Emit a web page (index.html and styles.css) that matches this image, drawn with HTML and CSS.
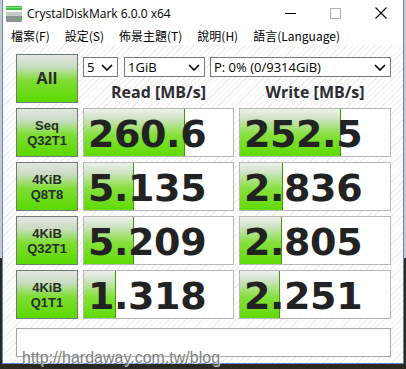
FILE: index.html
```html
<!DOCTYPE html>
<html lang="zh-Hant">
<head>
    <meta charset="utf-8" />
    <title>CrystalDiskMark 6.0.0 x64</title>
    <link rel="stylesheet" href="styles.css">
</head>
<body>
    <div class="window">
        <div class="titlebar">
            <svg class="appicon" width="16" height="16" viewBox="0 0 16 16">
                <rect x="0" y="0" width="16" height="4" fill="#3cc23c" />
                <rect x="0" y="1" width="16" height="1" fill="#7fe07f" />
                <rect x="0" y="6" width="16" height="10" rx="1" fill="#8c9490" />
                <rect x="0" y="6" width="16" height="4" fill="#c4cac6" />
                <rect x="12" y="12" width="3" height="2" fill="#3fd43f" />
            </svg>
            <span class="title">CrystalDiskMark 6.0.0 x64</span>
            <div class="controls">
                <span class="ctl"><svg width="11" height="11" viewBox="0 0 11 11"><path d="M0 5.5h11" stroke="#000" stroke-width="1" /></svg></span>
                <span class="ctl"><svg width="11" height="11" viewBox="0 0 11 11"><rect x="0.5" y="0.5" width="10" height="10" fill="none" stroke="#b0b0b0" stroke-width="1" /></svg></span>
                <span class="ctl"><svg width="12" height="12" viewBox="0 0 12 12"><path d="M0.5 0.5l11 11M11.5 0.5l-11 11" stroke="#000" stroke-width="1.1" /></svg></span>
            </div>
        </div>

        <div class="menubar">
            <span>檔案(F)</span>
            <span>設定(S)</span>
            <span>佈景主題(T)</span>
            <span>說明(H)</span>
            <span>語言(Language)</span>
        </div>

        <div class="content">
            <div class="grid">
                <div class="btn all">All</div>
                <div class="selects">
                    <div class="sel s-count">5<svg width="12" height="7" viewBox="0 0 12 7"><path d="M1 1l5 5 5-5" fill="none" stroke="#000" stroke-width="1.6" /></svg></div>
                    <div class="sel s-size">1GiB<svg width="12" height="7" viewBox="0 0 12 7"><path d="M1 1l5 5 5-5" fill="none" stroke="#000" stroke-width="1.6" /></svg></div>
                    <div class="sel s-drive">P: 0% (0/9314GiB)<svg width="12" height="7" viewBox="0 0 12 7"><path d="M1 1l5 5 5-5" fill="none" stroke="#000" stroke-width="1.6" /></svg></div>
                </div>
                <div class="head">Read [MB/s]</div>
                <div class="head">Write [MB/s]</div>

                <div class="btn"><span>Seq</span><span>Q32T1</span></div>
                <div class="val" style="--w:101px">260.6</div>
                <div class="val" style="--w:101px">252.5</div>

                <div class="btn"><span>4KiB</span><span>Q8T8</span></div>
                <div class="val" style="--w:50px">5.135</div>
                <div class="val" style="--w:43px">2.836</div>

                <div class="btn"><span>4KiB</span><span>Q32T1</span></div>
                <div class="val" style="--w:50px">5.209</div>
                <div class="val" style="--w:42px">2.805</div>

                <div class="btn"><span>4KiB</span><span>Q1T1</span></div>
                <div class="val" style="--w:32px">1.318</div>
                <div class="val" style="--w:40px">2.251</div>
            </div>
            <div class="comment"></div>
        </div>
    </div>

    <div class="watermark">http://hardaway.com.tw/blog</div>
</body>
</html>
```

FILE: styles.css
```css
* {
    margin: 0px;
    padding: 0px;
    box-sizing: border-box;
}

body {
    width: 406px;
    height: 369px;
    overflow: hidden;
    position: relative;
    background: linear-gradient(#c9c9c9 0 70%, #2b2a20 70%);
    font-family: 'Open Sans', 'Noto Sans CJK TC', sans-serif;
}

.window {
    margin-left: 2px;
    width: 402px;
    height: 364px;
    background: #fff;
    border: 1px solid #5a86d6;
    border-top: none;
    display: flex;
    flex-direction: column;
}

/* title bar */
.titlebar {
    height: 26px;
    display: flex;
    align-items: center;
    padding-left: 3px;
}

    .appicon {
        margin-top: 1px;
    }

    .title {
        margin-left: 5px;
        font-size: 12px;
        color: #000;
    }

    .controls {
        margin-left: auto;
        display: flex;
        height: 100%;
    }

    .ctl {
        width: 45px;
        display: flex;
        align-items: center;
        justify-content: center;
    }

/* menu */
.menubar {
    height: 19px;
    display: flex;
    align-items: center;
    gap: 15px;
    padding-left: 8px;
    font-family: 'Noto Sans CJK TC', sans-serif;
    font-size: 12px;
    color: #000;
}

/* main area */
.content {
    flex: 1;
    padding: 9px 12px 0px 13px;
    background: repeating-linear-gradient(135deg, #ffffff 0px, #ffffff 3px, #efefef 3px, #efefef 4px);
}

.grid {
    display: grid;
    grid-template-columns: 62px 151px 152px;
    grid-template-rows: 23px 21px repeat(4, 49px);
    gap: 5px;
}

.btn {
    border: 1px solid #6f7c6f;
    background: linear-gradient(#e4e6e4 0%, #c8dcc0 25%, #7ede32 55%, #5ad800 100%);
    display: flex;
    flex-direction: column;
    align-items: center;
    justify-content: center;
    text-align: center;
    font-family: 'Liberation Sans', sans-serif;
    font-weight: bold;
    font-size: 13px;
    line-height: 15px;
    color: #2a2a2a;
}

    .btn span {
        display: block;
    }

    .btn.all {
        grid-row: span 2;
        font-family: 'Open Sans', sans-serif;
        font-size: 16px;
    }

.selects {
    grid-column: span 2;
    display: flex;
    align-items: flex-end;
    gap: 5px;
}

.sel {
    height: 20px;
    border: 1px solid #7a7a7a;
    background: #fff;
    display: flex;
    align-items: center;
    justify-content: space-between;
    padding: 0px 4px 0px 3px;
    font-size: 13px;
    color: #000;
}

    .s-count { width: 35px; }
    .s-size { width: 81px; margin-left: 1px; }
    .s-drive { width: 181px; }

.head {
    text-align: center;
    font-size: 16px;
    font-weight: bold;
    line-height: 21px;
    color: #2d2d33;
}

.val {
    border: 1px solid #b7b7b7;
    background:
        linear-gradient(to right, transparent calc(var(--w) - 1px), #3a9a00 calc(var(--w) - 1px), #3a9a00 var(--w), transparent var(--w)),
        linear-gradient(#eef0ee 0%, #cfe3c5 20%, #86e03c 55%, #60da06 100%) 0 0 / var(--w) 100% no-repeat,
        #fff;
    display: flex;
    align-items: center;
    padding: 2px 0px 0px 4px;
    font-family: 'DejaVu Sans', sans-serif;
    font-weight: bold;
    font-size: 38px;
    letter-spacing: -0.4px;
    color: #222;
}

.comment {
    margin-top: 9px;
    width: 375px;
    height: 29px;
    border: 1px solid #a6a6a6;
    background: #fff;
}

.watermark {
    position: absolute;
    left: 22px;
    top: 350px;
    font-family: 'Liberation Sans', sans-serif;
    font-size: 16px;
    line-height: 16px;
    color: #808080;
    text-shadow: 1px 1px 0 rgba(255, 255, 255, 0.7);
}
```
